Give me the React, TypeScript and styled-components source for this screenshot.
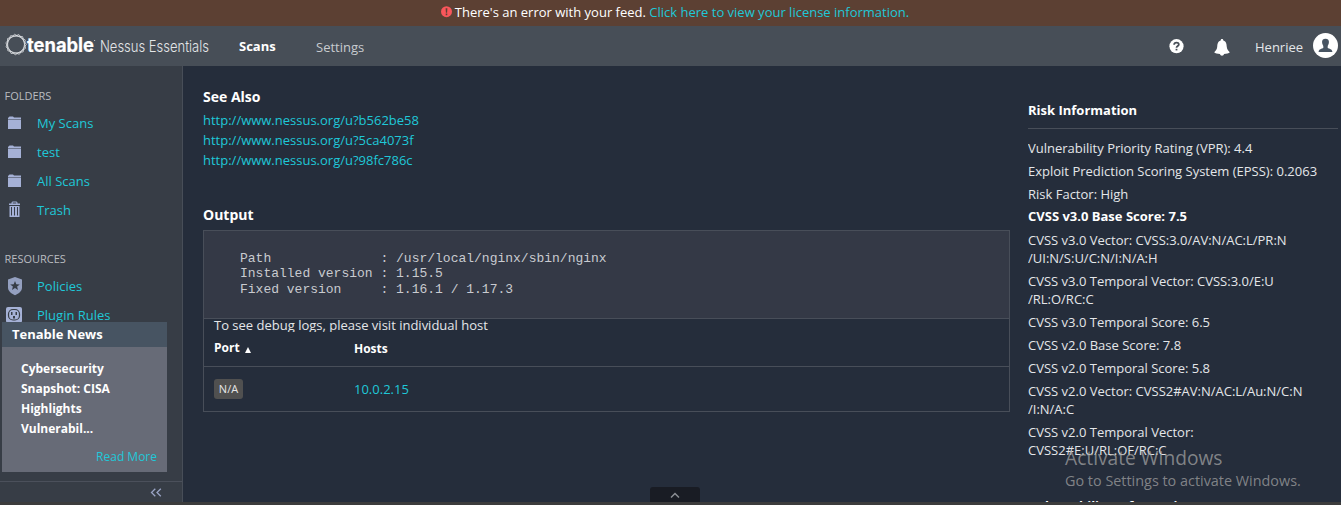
import React from 'react';
import styled, { createGlobalStyle } from 'styled-components';

const Global = createGlobalStyle`
  * { box-sizing: border-box; }
  body { margin: 0; background: #252d3b; overflow: hidden; }
  a { color: #1fc8d8; text-decoration: none; }
`;

const Page = styled.div`
  position: relative;
  display: flex;
  flex-direction: column;
  width: 1341px;
  height: 505px;
  overflow: hidden;
  border-bottom: 3px solid #3c3c3c;
  background: #252d3b;
  color: #e4e6e9;
  font: 13px/18px 'Open Sans', sans-serif;
`;

const Banner = styled.div`
  display: flex;
  justify-content: center;
  gap: 3px;
  height: 26px;
  flex: none;
  padding: 0 0 0 9px;
  background: #5c4033;
  color: #fff;
  line-height: 25px;
  white-space: pre;
  svg { margin-top: 6px; }
`;

const Header = styled.header`
  display: flex;
  height: 40px;
  flex: none;
  padding: 0 3px 0 5px;
  background: #474e57;
`;

const Tab = styled.a<{ $active?: boolean }>`
  width: 77px;
  padding-top: ${p => (p.$active ? 11 : 12)}px;
  font-weight: ${p => (p.$active ? 700 : 400)};
  && { color: ${p => (p.$active ? '#fff' : '#c8cbcf')}; }
`;

const HeaderTools = styled.div`
  display: flex;
  margin-left: auto;
  color: #e4e6e9;
`;

const HelpIcon = styled.svg`margin: 13px 30.5px 0 0;`;
const BellIcon = styled.svg`margin: 13px 25px 0 0;`;
const UserName = styled.span`padding-top: 12px; width: 58px;`;
const Avatar = styled.svg`margin-top: 7px;`;

const Body = styled.div`
  display: flex;
  flex: 1;
  min-height: 0;
`;

const Sidebar = styled.nav`
  position: relative;
  display: flex;
  flex-direction: column;
  width: 183px;
  flex: none;
  padding-top: 21px;
  background: #373d46;
  border-right: 1px solid #484e58;
`;

const GroupTitle = styled.div<{ $gap?: number }>`
  margin-top: ${p => p.$gap || 0}px;
  padding-left: 4.5px;
  height: 22px;
  color: #b9bcc0;
  font-size: 11px;
`;

const NavItem = styled.a`
  display: flex;
  height: 29px;
  padding-left: 6px;
  line-height: 29px;
`;

const NavIcon = styled.svg`
  width: 18px;
  height: 20px;
  margin: 5px 13px 0 0;
  flex: none;
  fill: #a5b1d6;
`;

const News = styled.section`
  position: absolute;
  left: 2px;
  top: 256px;
  width: 165px;
  height: 150px;
  background: #676b77;
`;

const NewsTitle = styled.h3`
  margin: 0;
  height: 25px;
  padding-left: 10px;
  background: #475462;
  color: #fff;
  font-size: 13px;
  line-height: 24px;
`;

const NewsText = styled.p`
  margin: 12px 19px 9px;
  color: #fff;
  font-size: 12px;
  font-weight: 700;
  line-height: 20px;
`;

const ReadMore = styled.a`
  display: block;
  padding-right: 10px;
  text-align: right;
  font-size: 12px;
`;

const Collapse = styled.div`
  height: 21px;
  margin-top: auto;
  padding: 6px 20px 0 0;
  border-top: 1px solid #4b505b;
  display: flex;
  justify-content: flex-end;
`;

const Content = styled.main`
  width: 807px;
  margin-left: 20px;
  padding-top: 21px;
  flex: none;
`;

const Heading = styled.h4`
  margin: 0;
  height: 23px;
  color: #fff;
  font-size: 14px;
  line-height: 20px;
`;

const LinkList = styled.div`
  display: flex;
  flex-direction: column;
  height: 95px;
  line-height: 20px;
`;

const OutputBox = styled.div`
  margin-top: 2px;
  border: 1px solid #484e59;
`;

const Pre = styled.pre`
  margin: 0;
  height: 87px;
  padding: 19.6px 0 0 36px;
  background: #343946;
  color: #c9cbd0;
  font: 13px/15.6px 'Liberation Mono', monospace;
`;

const DebugNote = styled.div`
  height: 14px;
  overflow: hidden;
  padding-left: 10px;
  border-top: 1px solid #484e59;
  line-height: 13px;
`;

const Row = styled.div<{ $head?: boolean }>`
  display: grid;
  grid-template-columns: 140px 1fr;
  align-items: center;
  height: ${p => (p.$head ? 34 : 45)}px;
  padding-left: 10px;
  border-top: ${p => (p.$head ? 'none' : '1px solid #484e59')};
  font-size: ${p => (p.$head ? 12 : 13)}px;
  font-weight: ${p => (p.$head ? 700 : 400)};
  color: #fff;
`;

const Port = styled.span`
  display: flex;
  align-items: center;
  gap: 5px;
  margin-top: -2px;
  svg { margin-top: 3px; }
`;

const Badge = styled.span`
  width: 29px;
  height: 20px;
  border-radius: 3px;
  background: #505050;
  color: #e6e6e6;
  font-size: 11px;
  line-height: 20px;
  text-align: center;
`;

const Risk = styled.aside`
  flex: 1;
  margin: 35px 3px 0 18px;
  overflow: hidden;
`;

const RiskTitle = styled.h5`
  margin: 0 0 10px;
  height: 28px;
  border-bottom: 1px solid #484e59;
  color: #fff;
  font-size: 13px;
`;

const RiskItem = styled.div<{ $bold?: boolean }>`
  position: relative;
  top: ${p => (p.$bold ? -1 : 0)}px;
  margin-bottom: 5px;
  white-space: pre;
  color: ${p => (p.$bold ? '#fff' : 'inherit')};
  font-weight: ${p => (p.$bold ? 700 : 400)};
`;

const NextTitle = styled(RiskTitle)`
  margin-top: 38px;
  border: 0;
`;

const Drawer = styled.div`
  position: absolute;
  left: 650px;
  bottom: 0;
  width: 50px;
  height: 15px;
  display: flex;
  justify-content: center;
  padding-top: 5px;
  border-radius: 3px 3px 0 0;
  background: #191c24;
`;

const Watermark = styled.div`
  position: absolute;
  left: 1065px;
  top: 445px;
  color: rgba(166, 166, 166, 0.72);
  font-size: 14.4px;
  line-height: 20px;
  white-space: nowrap;
`;

const WatermarkTitle = styled.div`
  margin-bottom: 1px;
  font-size: 19.2px;
  line-height: 25px;
`;

const Logo = () => (
  <svg width="234" height="40" viewBox="5 0 234 40">
    <g fill="none" stroke="#dfe2e5" strokeWidth="0.75" strokeLinejoin="round">
      {[-8, 17, 40].map(a => (
        <path
          key={a}
          transform={`rotate(${a} 16 18.5)`}
          d="M16 8.200 L25.800 15.300 L22.050 26.800 H9.950 L6.200 15.300 Z"
        />
      ))}
    </g>
    <text x="27" y="26" fill="#fff" stroke="#fff" strokeWidth="0.2" fontFamily="Inter, sans-serif" fontWeight="700" fontSize="20" textLength="67" lengthAdjust="spacingAndGlyphs">tenable</text>
    <circle cx="94.6" cy="14.5" r="0.6" fill="#ccc" />
    <text x="100" y="26.300" fill="#e4e6e8" fontFamily="Inter, sans-serif" fontWeight="300" fontSize="15.500" textLength="109" lengthAdjust="spacingAndGlyphs">Nessus Essentials</text>
  </svg>
);

const Folder = () => (
  <NavIcon viewBox="0 0 18 20"><path d="M2 4 3.500 2.600H7L8 3.500h7V5H2zM2 5.500h13V15H2z" /></NavIcon>
);
const Trash = () => (
  <NavIcon viewBox="0 0 18 20">
    <path fillRule="evenodd" d="M3 2.500h2.500V1.500L6.500.5h4l1 1v1H14V4H3zM6.700 1.500v1h3.600v-1zM3.500 5h10v11h-10zM5 6v8.500h1V6zm3 0v8.500h1V6zm3 0v8.500h1V6z" />
  </NavIcon>
);
const Shield = () => (
  <NavIcon viewBox="0 0 18 20">
    <path d="M9 0 16 2.500V10.500c0 3.500-3 6-7 7.700-4-1.700-7-4.200-7-7.700V2.500z" opacity=".85" />
    <path fill="#373d46" d="m9 4 1.300 3.200 3.500.2-2.700 2.200.9 3.400-3-1.900L6 13l.9-3.400-2.700-2.200 3.500-.2z" />
  </NavIcon>
);
const Plug = () => (
  <NavIcon viewBox="0 0 18 20">
    <rect width="16" height="16" y="1" rx="2" />
    <rect x="2.500" y="3.500" width="11" height="10.500" rx="4.500" fill="none" stroke="#373d46" strokeWidth="1.200" />
    <path fill="#373d46" d="M5 6h1.500v3H5zm4.500 0H11v3H9.500zM7 10h2v2.500H7z" />
  </NavIcon>
);

const risks: { text: string; bold?: boolean }[] = [
  { text: 'Vulnerability Priority Rating (VPR): 4.4' },
  { text: 'Exploit Prediction Scoring System (EPSS): 0.2063' },
  { text: 'Risk Factor: High' },
  { text: 'CVSS v3.0 Base Score: 7.5', bold: true },
  { text: 'CVSS v3.0 Vector: CVSS:3.0/AV:N/AC:L/PR:N\n/UI:N/S:U/C:N/I:N/A:H' },
  { text: 'CVSS v3.0 Temporal Vector: CVSS:3.0/E:U\n/RL:O/RC:C' },
  { text: 'CVSS v3.0 Temporal Score: 6.5' },
  { text: 'CVSS v2.0 Base Score: 7.8' },
  { text: 'CVSS v2.0 Temporal Score: 5.8' },
  { text: 'CVSS v2.0 Vector: CVSS2#AV:N/AC:L/Au:N/C:N\n/I:N/A:C' },
  { text: 'CVSS v2.0 Temporal Vector:\nCVSS2#E:U/RL:OF/RC:C' },
];

const output = `Path              : /usr/local/nginx/sbin/nginx
Installed version : 1.15.5
Fixed version     : 1.16.1 / 1.17.3`;

export default function App() {
  return (
    <>
      <Global />
      <Page>
        <Banner>
          <svg width="11" height="12" viewBox="0 0 11 12">
            <circle cx="5.500" cy="5.700" r="5.500" fill="#f9565b" />
            <path d="M4.600 2.200h1.800L6.100 6.700H4.900zM4.700 7.600h1.600v1.600H4.700z" fill="#5c4033" />
          </svg>
          <span>There's an error with your feed. <a href="#">Click here to view your license information.</a></span>
        </Banner>
        <Header>
          <Logo />
          <Tab href="#" $active>Scans</Tab>
          <Tab href="#">Settings</Tab>
          <HeaderTools>
            <HelpIcon width="15" height="15" viewBox="0 0 15 15">
              <circle cx="7.500" cy="7.200" r="7.100" fill="#fff" />
              <path d="M5.100 5.700C5.200 2.900 9.900 3 9.800 5.500 9.800 7 7.500 7 7.500 8.800" fill="none" stroke="#474e57" strokeWidth="1.800" />
              <path d="M6.600 9.800h1.800v1.600H6.600z" fill="#474e57" />
            </HelpIcon>
            <BellIcon width="16" height="17" viewBox="0 0 16 17">
              <path fill="#fff" d="M8 0c1 0 1.300.7 1.300 1.400C12.500 2.600 12.600 5 12.800 8c.2 2.300 1.200 3.600 3 5.200-.8 1-3.300 1.500-5.800 1.700-.3 2.300-3.700 2.300-4 0-2.500-.2-5-.7-5.800-1.700C2 11.600 3 10.300 3.200 8c.2-3 .3-5.400 3.500-6.600C6.700.7 7 0 8 0z" />
            </BellIcon>
            <UserName>Henriee</UserName>
            <Avatar width="25" height="25" viewBox="0 0 25 25">
              <circle cx="12.500" cy="12.500" r="12.500" fill="#fff" />
              <path fill="#475462" d="M12.500 5.700c2.500 0 3.700 1.500 3.400 3.800-.2 1.800-.8 2.600-1.200 3.400v2.200c1.300.8 4.700 1 4.700 3.900H5.600c0-2.900 3.400-3.100 4.700-3.900v-2.200c-.4-.8-1-1.600-1.200-3.400-.3-2.300.9-3.800 3.400-3.800z" />
            </Avatar>
          </HeaderTools>
        </Header>
        <Body>
          <Sidebar>
            <GroupTitle>FOLDERS</GroupTitle>
            <NavItem href="#"><Folder />My Scans</NavItem>
            <NavItem href="#"><Folder />test</NavItem>
            <NavItem href="#"><Folder />All Scans</NavItem>
            <NavItem href="#"><Trash />Trash</NavItem>
            <GroupTitle $gap={25}>RESOURCES</GroupTitle>
            <NavItem href="#"><Shield />Policies</NavItem>
            <NavItem href="#"><Plug />Plugin Rules</NavItem>
            <News>
              <NewsTitle>Tenable News</NewsTitle>
              <NewsText>Cybersecurity Snapshot: CISA Highlights Vulnerabil...</NewsText>
              <ReadMore href="#">Read More</ReadMore>
            </News>
            <Collapse>
              <svg width="12" height="9" viewBox="0 0 12 9" fill="none" stroke="#99a3c4" strokeWidth="1.300">
                <path d="M5.300.7 1.500 4.500l3.800 3.800M10.800.7 7 4.500l3.800 3.800" />
              </svg>
            </Collapse>
          </Sidebar>
          <Content>
            <Heading>See Also</Heading>
            <LinkList>
              <a href="#">http://www.nessus.org/u?b562be58</a>
              <a href="#">http://www.nessus.org/u?5ca4073f</a>
              <a href="#">http://www.nessus.org/u?98fc786c</a>
            </LinkList>
            <Heading>Output</Heading>
            <OutputBox>
              <Pre>{output}</Pre>
              <DebugNote>To see debug logs, please visit individual host</DebugNote>
              <Row $head>
                <Port>Port <svg width="6" height="6" viewBox="0 0 6 6"><path d="M3 0 6 6H0z" fill="#fff" /></svg></Port>
                <span>Hosts</span>
              </Row>
              <Row>
                <Badge>N/A</Badge>
                <a href="#">10.0.2.15</a>
              </Row>
            </OutputBox>
          </Content>
          <Risk>
            <RiskTitle>Risk Information</RiskTitle>
            {risks.map(r => <RiskItem key={r.text} $bold={r.bold}>{r.text}</RiskItem>)}
            <NextTitle>Vulnerability Information</NextTitle>
          </Risk>
        </Body>
        <Drawer>
          <svg width="10" height="7" viewBox="0 0 10 7"><path d="M1 5.500 5 1.500l4 4" fill="none" stroke="#8b8e94" strokeWidth="1.500" /></svg>
        </Drawer>
        <Watermark>
          <WatermarkTitle>Activate Windows</WatermarkTitle>
          Go to Settings to activate Windows.
        </Watermark>
      </Page>
    </>
  );
}
